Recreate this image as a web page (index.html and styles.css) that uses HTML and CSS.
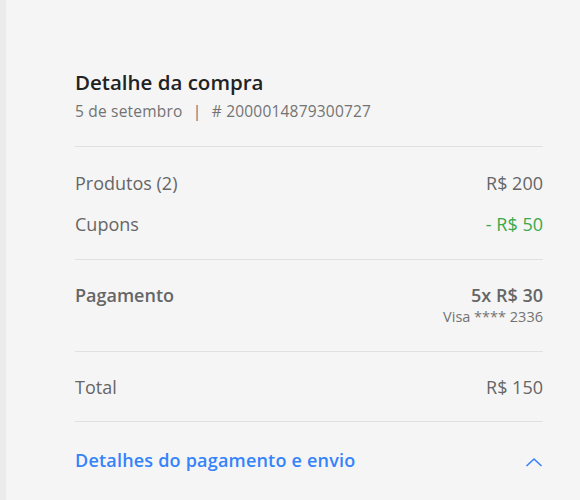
FILE: index.html
```html
<!DOCTYPE html>
<html lang="pt-BR">
<head>
    <meta charset="UTF-8">
    <meta name="viewport" content="width=device-width, initial-scale=1.0">
    <title>Detalhe da compra</title>
    <link rel="stylesheet" href="styles.css">
</head>
<body>
<div class="page">
    <div class="edge"></div>
    <div class="panel">
        <div class="header">
            <h2>Detalhe da compra</h2>
            <p class="meta">5 de setembro <span class="sep">|</span> # 2000014879300727</p>
        </div>

        <div class="section">
            <div class="row">
                <span>Produtos (2)</span>
                <span>R$ 200</span>
            </div>
            <div class="row">
                <span>Cupons</span>
                <span class="discount">- R$ 50</span>
            </div>
        </div>

        <div class="section">
            <div class="row strong">
                <span>Pagamento</span>
                <span>5x R$ 30</span>
            </div>
            <div class="card">Visa **** 2336</div>
        </div>

        <div class="section">
            <div class="row">
                <span>Total</span>
                <span>R$ 150</span>
            </div>
        </div>

        <a href="#" class="toggle">
            <span>Detalhes do pagamento e envio</span>
            <svg width="18" height="10" viewBox="0 0 18 10">
                <path d="M1.5 9 L9 2 L16.5 9" fill="none" stroke="#3483fa" stroke-width="1.6"/>
            </svg>
        </a>
    </div>
</div>
</body>
</html>
```

FILE: styles.css
```css
body {
    margin: 0;
    background-color: #f5f5f5;
    font-family: "Open Sans", sans-serif;
    color: #666;
}
.page {
    display: flex;
    min-height: 500px;
}
.edge {
    width: 6px;
    background: #ebebeb;
}
.panel {
    flex: 1;
    padding: 0 37px 0 69px;
}
.header {
    padding: 70px 0 25px;
    border-bottom: 1px solid #e0e0e0;
}
.header h2 {
    margin: 0;
    font-size: 20.5px;
    line-height: 24px;
    font-weight: 600;
    color: #222;
}
.meta {
    margin: 7px 0 0;
    font-size: 15.5px;
    line-height: 20px;
    letter-spacing: 0.2px;
    color: #737373;
}
.sep {
    margin: 0 6px;
}
.section {
    padding: 23px 0 22px;
    border-bottom: 1px solid #e0e0e0;
    display: flex;
    flex-direction: column;
    gap: 17px;
}
.section:nth-child(2) {
    padding-top: 24px;
    padding-bottom: 23px;
}
.row {
    display: flex;
    justify-content: space-between;
    font-size: 18px;
    line-height: 24px;
}
.strong {
    font-weight: 600;
}
.discount {
    color: #39a94b;
}
.card {
    margin-top: -17px;
    margin-bottom: 2px;
    text-align: right;
    font-size: 14.5px;
    line-height: 20px;
    color: #737373;
}
.toggle {
    display: flex;
    justify-content: space-between;
    align-items: center;
    padding-top: 26px;
    font-size: 18px;
    line-height: 24px;
    font-weight: 600;
    letter-spacing: 0.2px;
    color: #3483fa;
    text-decoration: none;
}
.toggle svg {
    margin-top: 4px;
}
```
